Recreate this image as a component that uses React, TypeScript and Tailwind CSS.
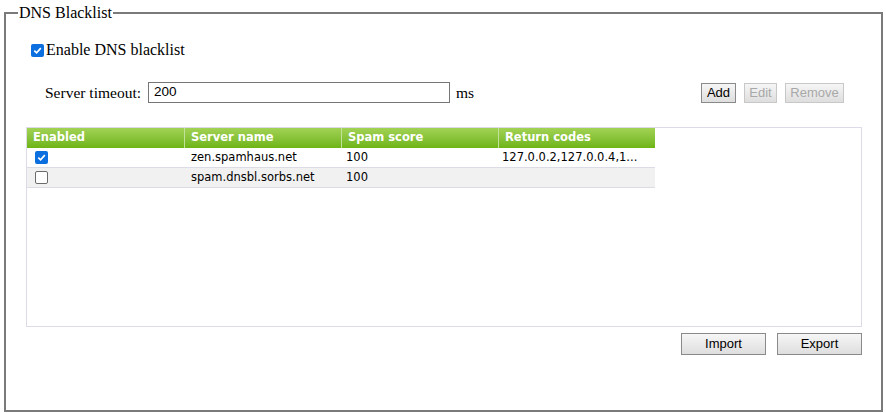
import React from "react";

const rows = [
  { on: true, name: "zen.spamhaus.net", score: "100", codes: "127.0.0.2,127.0.0.4,1..." },
  { on: false, name: "spam.dnsbl.sorbs.net", score: "100", codes: "" },
];

function Box({ on }: { on: boolean }) {
  return on ? (
    <span className="flex h-[13px] w-[13px] items-center justify-center rounded-[2px] bg-[#0b6fe0]">
      <svg viewBox="0 0 12 12" className="h-[11px] w-[11px]">
        <path d="M2.5 6.2 L5 8.6 L9.6 3.4" fill="none" stroke="white" strokeWidth="1.8" />
      </svg>
    </span>
  ) : (
    <span className="block h-[13px] w-[13px] rounded-[2px] border border-[#6b6b6b] bg-white" />
  );
}

function Btn({ label, disabled, className }: { label: string; disabled?: boolean; className?: string }) {
  return (
    <button
      className={
        "flex items-center justify-center border bg-gradient-to-b from-[#f6f6f6] to-[#dedede] font-['Liberation_Sans',sans-serif] " +
        (disabled ? "border-[#c8c8c8] text-[#a8a8a8] " : "border-[#8a8a8a] text-black ") +
        (className ?? "")
      }
    >
      {label}
    </button>
  );
}

export default function App() {
  return (
    <div className="h-[413px] w-[886px] bg-white pl-[4px] pr-[3px] pt-[4px] font-['Liberation_Serif',serif]">
      <fieldset className="h-[408px] border-2 border-[#7a7a7a] px-0 pb-0 pt-0">
        <legend className="ml-[12px] px-[1px] text-[16px] leading-[18px] text-black">DNS Blacklist</legend>
        <label className="ml-[25px] mt-[19px] flex items-center gap-[2px] text-[16px] leading-[18px] text-black">
          <Box on={true} />
          Enable DNS blacklist
        </label>
        <div className="mt-[23px] flex h-[21px] items-center">
          <span className="ml-[39px] text-[15.5px] text-black">Server timeout:</span>
          <div className="ml-[7px] flex h-[21px] w-[302px] items-center border border-[#767676] px-[5px] font-['Liberation_Sans',sans-serif] text-[13.5px] text-black">
            200
          </div>
          <span className="ml-[6px] text-[15.5px] text-black">ms</span>
          <div className="ml-auto mr-[37px] flex gap-[8px] text-[13px]">
            <Btn label="Add" className="h-[20px] w-[35px]" />
            <Btn label="Edit" disabled className="h-[20px] w-[33px]" />
            <Btn label="Remove" disabled className="h-[20px] w-[59px]" />
          </div>
        </div>
        <div className="ml-[20px] mr-[19px] mt-[24px] h-[200px] border border-[#dcdce8] font-['DejaVu_Sans',sans-serif] text-[11.5px]">
          <div className="flex h-[20px] w-[628px] bg-gradient-to-b from-[#a2d254] to-[#6eb413] font-bold text-white">
            {["Enabled", "Server name", "Spam score", "Return codes"].map((h, i) => (
              <div
                key={h}
                className={"flex w-[157px] items-center pl-[6px] " + (i > 0 ? "border-l border-[#c2e29a]" : "")}
              >
                {h}
              </div>
            ))}
          </div>
          {rows.map((r, i) => (
            <div
              key={r.name}
              className={
                "flex h-[20px] w-[628px] items-center border-b border-[#dcdce6] text-black " +
                (i % 2 ? "bg-[#f1f1f1]" : "bg-white")
              }
            >
              <div className="w-[157px] pl-[8px]">
                <Box on={r.on} />
              </div>
              <div className="w-[157px] pl-[7px]">{r.name}</div>
              <div className="w-[157px] pl-[5px]">{r.score}</div>
              <div className="w-[157px] pl-[4px]">{r.codes}</div>
            </div>
          ))}
        </div>
        <div className="mr-[19px] mt-[6px] flex justify-end gap-[11px] text-[13px]">
          <Btn label="Import" className="h-[22px] w-[85px]" />
          <Btn label="Export" className="h-[22px] w-[85px]" />
        </div>
      </fieldset>
    </div>
  );
}
